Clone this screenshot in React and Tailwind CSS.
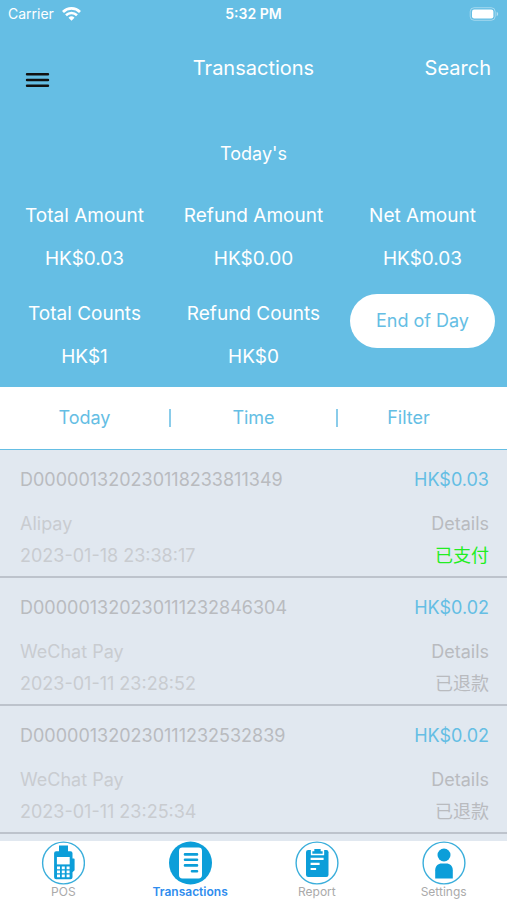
import React, { useState } from "react";

const stats = [
  { label: "Total Amount", value: "HK$0.03" },
  { label: "Refund Amount", value: "HK$0.00" },
  { label: "Net Amount", value: "HK$0.03" },
  { label: "Total Counts", value: "HK$1" },
  { label: "Refund Counts", value: "HK$0" },
];

const transactions = [
  {
    id: "D000001320230118233811349",
    amount: "HK$0.03",
    method: "Alipay",
    time: "2023-01-18 23:38:17",
    status: "已支付",
    paid: true,
  },
  {
    id: "D000001320230111232846304",
    amount: "HK$0.02",
    method: "WeChat Pay",
    time: "2023-01-11 23:28:52",
    status: "已退款",
    paid: false,
  },
  {
    id: "D000001320230111232532839",
    amount: "HK$0.02",
    method: "WeChat Pay",
    time: "2023-01-11 23:25:34",
    status: "已退款",
    paid: false,
  },
];

function StatusBar() {
  return (
    <div className="grid h-7 grid-cols-3 items-center px-2 text-sm">
      <div className="flex items-center gap-2">
        <span>Carrier</span>
        <svg width="19" height="14" viewBox="0 0 19 14" fill="none">
          <path d="M1 4.9a12.2 12.2 0 0 1 17 0" stroke="currentColor" strokeWidth="2.8" />
          <path d="M4 8.2a7.9 7.9 0 0 1 11 0" stroke="currentColor" strokeWidth="2.6" />
          <path d="M9.5 13.8 6.5 10.8a4.3 4.3 0 0 1 6 0z" fill="currentColor" />
        </svg>
      </div>
      <div className="text-center font-semibold">5:32 PM</div>
      <div className="flex justify-end">
        <svg width="31" height="14" viewBox="0 0 31 14" fill="none">
          <rect x="2.2" y="0.7" width="25" height="12.6" rx="4" stroke="#fff" strokeOpacity="0.4" />
          <rect x="4" y="2.5" width="21.4" height="9" rx="2.2" fill="#fff" />
          <path d="M28.7 4.8c2 .8 2 3.6 0 4.4z" fill="#fff" fillOpacity="0.5" />
        </svg>
      </div>
    </div>
  );
}

function PosIcon() {
  return (
    <svg className="size-11" viewBox="0 0 44 44" fill="#0c9ed9">
      <circle cx="22.5" cy="22" r="20.9" fill="#fff" stroke="#3aaedb" strokeWidth="1.4" />
      <path d="M18 4.5h9v7.5h-9z" />
      <path d="M15.1 10.3h14.4a2 2 0 0 1 2 2v5.2h1.3a.8.8 0 0 1 .8.8v11l-2.1 2v5a2 2 0 0 1-2 2H15.1a2 2 0 0 1-2-2v-24a2 2 0 0 1 2-2z" />
      <path d="M15.9 16h12.8v7.4H15.9z" fill="#fff" />
      <g fill="#fff">
        <path d="M16 25.6h3v2.6h-3zM20.8 25.6h3v2.6h-3zM25.6 25.6h3v2.6h-3z" />
        <path d="M16 29.6h3v2.6h-3zM20.8 29.6h3v2.6h-3zM25.6 29.6h3v2.6h-3z" />
        <path d="M16 33.6h3v2.6h-3zM20.8 33.6h3v2.6h-3zM25.6 33.6h3v2.6h-3z" />
      </g>
    </svg>
  );
}

function TransactionsIcon() {
  return (
    <svg className="size-11" viewBox="0 0 44 44">
      <circle cx="22.5" cy="22" r="21.5" fill="#0c9ed9" />
      <rect x="11" y="6.5" width="23" height="31" rx="3.4" fill="#fff" />
      <path d="M17 13.4h12M17 18.8h12M17 24.4h12M24 30.3h5" stroke="#0c9ed9" strokeWidth="2.6" strokeLinecap="round" />
    </svg>
  );
}

function ReportIcon() {
  return (
    <svg className="size-11" viewBox="0 0 44 44">
      <circle cx="22" cy="22" r="20.9" fill="#fff" stroke="#3aaedb" strokeWidth="1.4" />
      <rect x="11" y="9" width="22.5" height="27" rx="2.2" fill="#0c9ed9" />
      <path d="M16.6 13.6V9.5h2V7.3h7.8v2.2h2v4.1z" fill="#0c9ed9" stroke="#fff" strokeWidth="1.5" />
      <path d="M15.6 17.8h13M15.6 22.8h9M15.6 28h5.5" stroke="#fff" strokeWidth="2.2" />
    </svg>
  );
}

function SettingsIcon() {
  return (
    <svg className="size-11" viewBox="0 0 44 44" fill="#0c9ed9">
      <circle cx="22" cy="22" r="20.9" fill="#fff" stroke="#3aaedb" strokeWidth="1.4" />
      <circle cx="22" cy="14" r="6.5" />
      <path d="M13.2 37.5v-8.3c0-4.2 2.8-6.7 6.6-6.7h4.4c3.8 0 6.6 2.5 6.6 6.7v8.3z" />
    </svg>
  );
}

const tabs = [
  { name: "POS", icon: <PosIcon /> },
  { name: "Transactions", icon: <TransactionsIcon /> },
  { name: "Report", icon: <ReportIcon /> },
  { name: "Settings", icon: <SettingsIcon /> },
];

export default function App() {
  const [activeTab, setActiveTab] = useState("Transactions");

  return (
    <div className="flex h-screen flex-col bg-[#e1e8f0] font-['Inter','Noto_Sans_CJK_SC',sans-serif]">
      <header className="bg-[#65bee4] pb-[9px] text-white">
        <StatusBar />

        <div className="grid grid-cols-3 px-4 pt-6 text-xl">
          <button aria-label="Menu" className="mt-3 ml-2 flex h-8 w-8 items-center">
            <svg width="28" height="16" viewBox="0 0 28 16" fill="none">
              <path d="M3 2.3h21M3 8h21M3 13.7h21" stroke="#111" strokeWidth="2.4" strokeLinecap="round" />
            </svg>
          </button>
          <h1 className="pt-1 text-center leading-6">Transactions</h1>
          <button className="self-start justify-self-end pt-1 leading-6">Search</button>
        </div>

        <h2 className="pt-[42px] text-center text-lg leading-8">Today's</h2>

        {/* Daily totals */}
        <div className="grid grid-cols-3 gap-y-3 pt-6 text-center text-[19px]">
          {stats.map((s) => (
            <div key={s.label}>
              <div className="leading-[43px]">{s.label}</div>
              <div className="leading-[43px]">{s.value}</div>
            </div>
          ))}
          <div className="px-3 pt-0.5">
            <button className="h-[54px] w-full rounded-full bg-white text-lg text-[#65bee4]">
              End of Day
            </button>
          </div>
        </div>
      </header>

      <div className="grid grid-cols-3 border-b border-[#65bee4] bg-white text-lg leading-[62px] text-[#65bee4]">
        <button>Today</button>
        <button className="flex items-center justify-between">
          <span className="h-[18px] w-0.5 bg-[#8accea]"></span>
          <span>Time</span>
          <span className="h-[18px] w-0.5 bg-[#8accea]"></span>
        </button>
        <button className="pr-7">Filter</button>
      </div>

      <ul className="min-h-0 flex-1 overflow-y-auto text-[#b9bbbf]">
        {transactions.map((t) => (
          <li key={t.id} className="border-b-2 border-[#bdc3cc] pt-4 pr-[18px] pb-1 pl-5 text-lg">
            <div className="flex justify-between leading-7">
              <span>{t.id}</span>
              <span className="text-[#65bee4]">{t.amount}</span>
            </div>
            <div className="flex items-end justify-between pt-[14px] leading-8">
              <div className="text-[#c9ccd0]">
                <div>{t.method}</div>
                <div>{t.time}</div>
              </div>
              <div className="flex flex-col items-end">
                <button>Details</button>
                <span className={t.paid ? "text-[#22ee22]" : ""}>{t.status}</span>
              </div>
            </div>
          </li>
        ))}
      </ul>

      <nav className="grid grid-cols-4 bg-white pb-0.5">
        {tabs.map((tab) => (
          <button
            key={tab.name}
            onClick={() => setActiveTab(tab.name)}
            className={`flex flex-col items-center text-xs leading-[13px] ${
              activeTab === tab.name ? "font-semibold text-[#2f8dee]" : "text-[#aaa]"
            }`}
          >
            {tab.icon}
            {tab.name}
          </button>
        ))}
      </nav>
    </div>
  );
}
